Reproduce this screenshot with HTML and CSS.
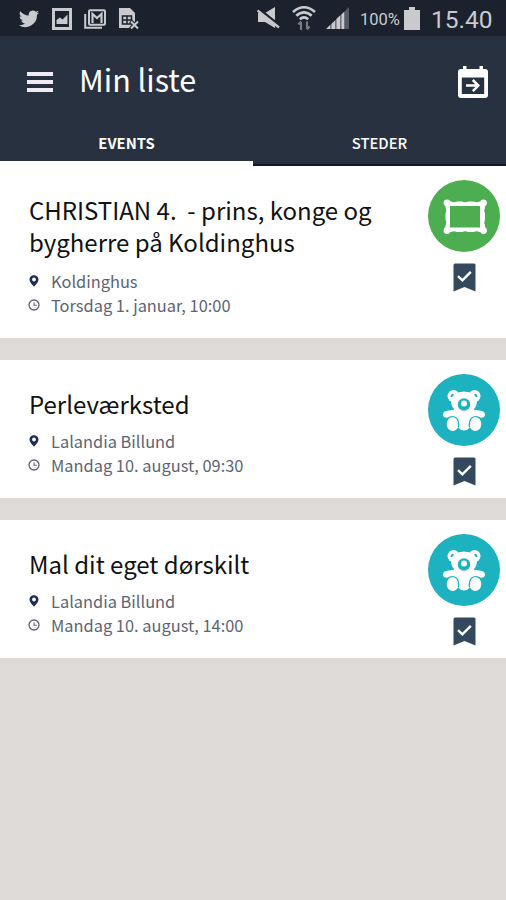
FILE: index.html
```html
<!DOCTYPE html>
<html lang="da">
<head>
    <title>Min liste</title>
    <meta charset="utf-8" />
    <meta name="viewport" content="width=device-width, initial-scale=1" />
    <link rel="stylesheet" href="styles.css">
</head>
<body>

<!-- Shared icons -->
<svg class="sprite" width="0" height="0">
    <symbol id="pin" viewBox="0 0 10 12">
        <path fill-rule="evenodd" d="M5 0.2C2.3 0.2 0.5 2 0.5 4.5C0.5 7.2 3 9.2 5 11.8C7 9.2 9.5 7.2 9.5 4.5C9.5 2 7.7 0.2 5 0.2ZM5 2.6A1.9 1.9 0 1 1 5 6.4A1.9 1.9 0 1 1 5 2.6Z"/>
    </symbol>
    <symbol id="clock" viewBox="0 0 12 12">
        <circle cx="6" cy="6" r="5" fill="none" stroke="currentColor" stroke-width="1.3"/>
        <path d="M6 3.4V6.3H8.8" fill="none" stroke="currentColor" stroke-width="1.1"/>
    </symbol>
    <symbol id="bookmark" viewBox="0 0 23 29">
        <path d="M2 0.5H21Q22.5 0.5 22.5 2V28.5L11.5 24L0.5 28.5V2Q0.5 0.5 2 0.5Z" fill="#34495e"/>
        <path d="M5 13.2L9.4 17.4L17.8 8.8" fill="none" stroke="#fff" stroke-width="2.4"/>
    </symbol>
    <symbol id="bear" viewBox="0 0 72 72">
        <g fill="#fff">
            <circle cx="25.500" cy="22" r="6"/>
            <circle cx="46.500" cy="22" r="6"/>
            <path d="M26 20Q36 15 46 20Q52 30 45.500 35.500L54 37Q57.500 38 57 41.500Q56 44.500 52 43.500L46 43V50H41.500V54Q36 59 30.500 54V50H26V43L20 43.500Q16 44.500 15 41.500Q14.500 38 18 37L26.500 35.500Q20 30 26 20Z"/>
            <ellipse cx="24.700" cy="50" rx="6" ry="7"/>
            <ellipse cx="47.300" cy="50" rx="6" ry="7"/>
        </g>
        <g fill="none" stroke="#1cb2c0">
            <path d="M23.500 23Q23.300 20.900 25.500 20.600M48.500 23Q48.700 20.900 46.500 20.600" stroke-width="1.800"/>
            <path d="M19.500 44.500Q24 40.500 29 44.500Q31.300 48 30.600 53M52.500 44.500Q48 40.500 43 44.500Q40.700 48 41.400 53" stroke-width="1.200"/>
        </g>
        <circle cx="36" cy="30.500" r="6.200" fill="#1cb2c0"/>
        <circle cx="36" cy="29.500" r="3" fill="#fff"/>
    </symbol>
</svg>

<!-- Android status bar -->
<div class="status-bar">
    <div class="notifications">
        <svg width="22" height="22" viewBox="0 0 24 24" fill="currentColor"><path d="M23 4.900a9 9 0 0 1-2.600.7 4.500 4.500 0 0 0 2-2.500 9 9 0 0 1-2.900 1.100 4.500 4.500 0 0 0-7.700 4.100A12.800 12.800 0 0 1 2.500 3.600a4.500 4.500 0 0 0 1.400 6 4.500 4.500 0 0 1-2-.5c0 2.200 1.500 4 3.600 4.500a4.500 4.500 0 0 1-2 .1 4.500 4.500 0 0 0 4.200 3.100A9 9 0 0 1 1 18.700 12.800 12.800 0 0 0 20.700 7.300 9 9 0 0 0 23 4.900z"/></svg>
        <svg width="20" height="22" viewBox="0 0 20 22"><rect x="1.500" y="1.500" width="17" height="19" fill="none" stroke="currentColor" stroke-width="3"/><path d="M4.500 16V12L8 9.500L10.500 11.500L15.500 6.500V16Z" fill="currentColor"/></svg>
        <svg width="22" height="20" viewBox="0 0 22 20" fill="none" stroke="currentColor" stroke-width="2"><path d="M1.200 5V18.800H18"/><rect x="5" y="1.200" width="16" height="14.500" rx="1"/><path d="M8.500 14V5L13 9L17.500 5V14" stroke-width="2.200"/></svg>
        <svg width="22" height="22" viewBox="0 0 22 22"><path fill="currentColor" d="M1 0H12L17 5V20H1Z"/><path d="M4.500 8H13.500V16H4.500ZM4.500 12H13.500M9 8V16" fill="none" stroke="#1b212d" stroke-width="1.500"/><path d="M12.500 13L20.500 21M20.500 13L12.500 21" stroke="#1b212d" stroke-width="4"/><path d="M13 13.500L20 20.500M20 13.500L13 20.500" stroke="currentColor" stroke-width="2"/></svg>
    </div>
    <div class="system">
        <svg class="mute" width="23" height="22" viewBox="0 0 23 22"><path fill="currentColor" d="M1 6H8L18 0V21L8 15H1Z"/><path d="M1 2L22 19" stroke="#1b212d" stroke-width="4"/><path d="M0.500 3.500L22 20.500" stroke="currentColor" stroke-width="2.300"/></svg>
        <svg class="wifi" width="24" height="25" viewBox="0 0 24 25" fill="none" stroke="currentColor" stroke-width="2.500"><path d="M1 6Q12-3.500 23 6M4.300 9.800Q12 3 19.700 9.800M7.800 13.300Q12 9.500 16.200 13.300"/><g stroke="#747982" stroke-width="2.200"><path d="M9 24V16M6.500 18.500L9 15.500M15 15.500V23M17.500 20.500L15 23.500"/></g></svg>
        <svg class="signal" width="24" height="23" viewBox="0 0 24 23" fill="currentColor"><path d="M0 22L4.500 17.500V22ZM5.300 17L9.500 13V22H5.300ZM10.300 12L14.500 8V22H10.300Z"/><path d="M15.300 7.500L18.500 4.500V22H15.300Z"/><path d="M19 4L23 0V22H19Z" fill="#555b66"/></svg>
        <span class="percent">100%</span>
        <svg class="battery" width="16" height="23" viewBox="0 0 16 23" fill="currentColor"><path d="M5 0H11V3H16V23H0V3H5Z"/></svg>
        <span class="time">15.40</span>
    </div>
</div>

<header id="header">
    <div class="toolbar">
        <button class="menu" aria-label="Menu"><span></span><span></span><span></span></button>
        <h1>Min liste</h1>
        <svg class="calendar" width="30" height="33" viewBox="0 0 30 33"><path fill="#fff" fill-rule="evenodd" d="M5 0H8.500V3H21.500V0H25V3H27Q30 3 30 6V29Q30 32 27 32H3Q0 32 0 29V6Q0 3 3 3H5ZM3.800 11.500V28H26.200V11.500Z"/><path d="M8 19.600H20M14.800 14L20.300 19.600L14.800 25.200" fill="none" stroke="#fff" stroke-width="2.500"/></svg>
    </div>
    <nav class="tabs">
        <a class="tab active">EVENTS</a>
        <a class="tab">STEDER</a>
    </nav>
</header>

<main class="list">
    <article class="card featured">
        <div class="info">
            <h2>CHRISTIAN 4.&nbsp; - prins, konge og bygherre på Koldinghus</h2>
            <p><svg class="pin"><use href="#pin"/></svg>Koldinghus</p>
            <p><svg class="clock"><use href="#clock"/></svg>Torsdag 1. januar, 10:00</p>
        </div>
        <div class="side">
            <svg class="category green" viewBox="0 0 72 72">
                <g fill="#fff">
                    <rect x="17.500" y="21.500" width="39.500" height="30.500"/>
                    <circle cx="19" cy="22.800" r="3.400"/><circle cx="55.500" cy="22.800" r="3.400"/>
                    <circle cx="19" cy="50.500" r="3.400"/><circle cx="55.500" cy="50.500" r="3.400"/>
                </g>
                <g fill="#4cae50">
                    <ellipse cx="26" cy="20" rx="3" ry="2.200"/><ellipse cx="37.200" cy="20" rx="3" ry="2.200"/><ellipse cx="48.500" cy="20" rx="3" ry="2.200"/>
                    <ellipse cx="26" cy="53.500" rx="3" ry="2.200"/><ellipse cx="37.200" cy="53.500" rx="3" ry="2.200"/><ellipse cx="48.500" cy="53.500" rx="3" ry="2.200"/>
                    <ellipse cx="16" cy="30.500" rx="2.200" ry="3"/><ellipse cx="16" cy="42.500" rx="2.200" ry="3"/>
                    <ellipse cx="58.500" cy="30.500" rx="2.200" ry="3"/><ellipse cx="58.500" cy="42.500" rx="2.200" ry="3"/>
                    <rect x="22" y="26" width="30" height="21.500"/>
                </g>
            </svg>
            <svg class="bookmark"><use href="#bookmark"/></svg>
        </div>
    </article>

    <article class="card">
        <div class="info">
            <h2>Perleværksted</h2>
            <p><svg class="pin"><use href="#pin"/></svg>Lalandia Billund</p>
            <p><svg class="clock"><use href="#clock"/></svg>Mandag 10. august, 09:30</p>
        </div>
        <div class="side">
            <svg class="category teal"><use href="#bear"/></svg>
            <svg class="bookmark"><use href="#bookmark"/></svg>
        </div>
    </article>

    <article class="card">
        <div class="info">
            <h2>Mal dit eget dørskilt</h2>
            <p><svg class="pin"><use href="#pin"/></svg>Lalandia Billund</p>
            <p><svg class="clock"><use href="#clock"/></svg>Mandag 10. august, 14:00</p>
        </div>
        <div class="side">
            <svg class="category teal"><use href="#bear"/></svg>
            <svg class="bookmark"><use href="#bookmark"/></svg>
        </div>
    </article>
</main>

</body>
</html>
```
FILE: styles.css
```css
/* Base styles */
* {
    box-sizing: border-box;
}

body {
    margin: 0;
    min-height: 100vh;
    background: #dedbd8;
    font-family: "Noto Sans CJK SC", "Open Sans", sans-serif;
    color: #111;
}

svg {
    display: block;
    flex-shrink: 0;
}

.sprite {
    display: none;
}

/* Status bar */
.status-bar {
    display: flex;
    justify-content: space-between;
    height: 36px;
    padding: 0 14px 0 18px;
    background: #1b212d;
    color: #c9cacd;
    font-family: Roboto, sans-serif;
}

.notifications,
.system {
    display: flex;
    align-items: center;
}

.notifications {
    gap: 12px;
    padding-top: 2px;
}

.mute {
    margin-right: 12px;
}

.wifi {
    margin-right: 10px;
}

.signal {
    margin-right: 10px;
}

.percent {
    width: 41px;
    font-size: 16.500px;
    padding-top: 3px;
}

.battery {
    margin: 0 11px 0 3px;
}

.time {
    width: 61px;
    padding-top: 3px;
    font-size: 24.500px;
    white-space: nowrap;
}

/* Header */
#header {
    height: 130px;
    background: #28313f;
    color: #fff;
}

.toolbar {
    display: flex;
    align-items: center;
    height: 90px;
    padding: 0 18px 0 27px;
}

.menu {
    display: flex;
    flex-direction: column;
    gap: 4px;
    width: 26px;
    margin-top: 2px;
    padding: 0;
    border: none;
    background: none;
}

.menu span {
    height: 4px;
    background: #f0e9f6;
}

#header h1 {
    flex: 1;
    margin: -4px 0 0 26px;
    font-size: 30.500px;
    font-weight: 400;
    line-height: 40px;
}

.calendar {
    margin-top: 2px;
}

/* Tabs */
.tabs {
    display: flex;
    height: 40px;
}

.tab {
    flex: 1;
    padding-top: 5px;
    border-bottom: 2px solid #111722;
    font-size: 14.800px;
    font-weight: 500;
    line-height: 24px;
    text-align: center;
}

.tab.active {
    border-bottom: 5px solid #fff;
    font-weight: 700;
}

/* Event list */
.card {
    display: flex;
    justify-content: space-between;
    margin-bottom: 22px;
    padding: 28px 6px 21px 29px;
    background: #fff;
}

.info {
    width: 360px;
}

.card h2 {
    margin: 0 0 9px;
    font-size: 24px;
    font-weight: 400;
    line-height: 32px;
}

.card.featured h2 {
    margin-bottom: 11px;
}

.card p {
    display: flex;
    align-items: center;
    margin: 0;
    font-size: 16.400px;
    line-height: 24px;
    color: #5d6472;
}

.pin {
    width: 10px;
    height: 12px;
    margin: 0 12px 0 0;
    fill: #1d2d57;
}

.clock {
    width: 12px;
    height: 12px;
    margin: 0 11px 0 -1px;
}

/* Category badge and bookmark */
.side {
    display: flex;
    flex-direction: column;
    align-items: center;
    gap: 11px;
    height: 88px;
    margin-top: -14px;
}

.category {
    width: 72px;
    height: 72px;
    border-radius: 50%;
}

.green {
    background: #4cae50;
}

.teal {
    background: #1cb2c0;
}

.bookmark {
    width: 23px;
    height: 29px;
}
```
